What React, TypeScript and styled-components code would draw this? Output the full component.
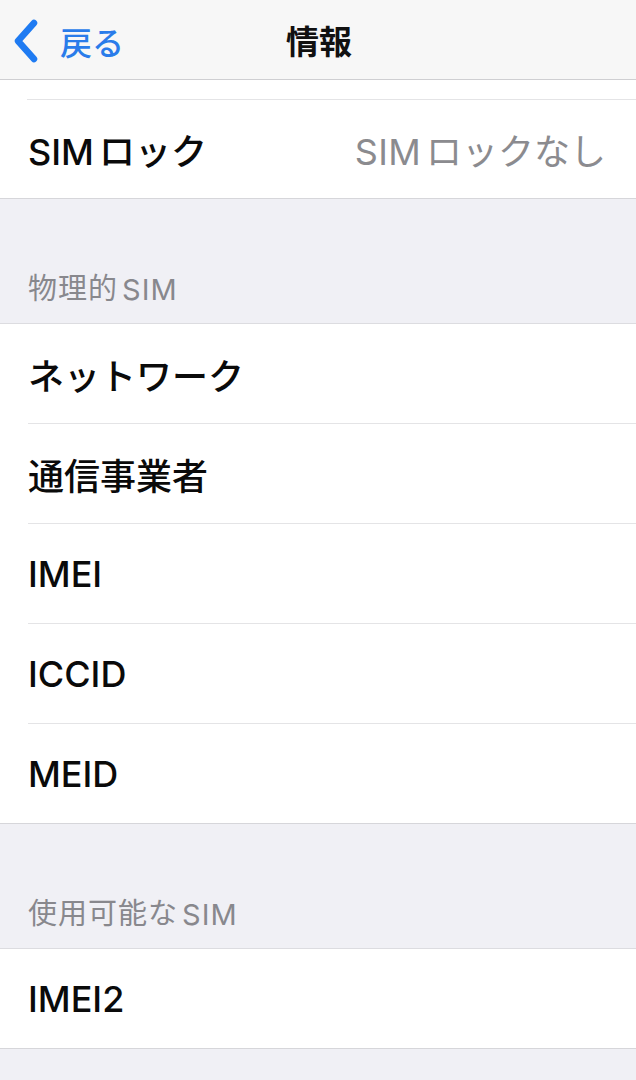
import { Fragment } from "react";
import styled, { createGlobalStyle } from "styled-components";

const GlobalStyle = createGlobalStyle`
  html, body {
    margin: 0;
    padding: 0;
    background: #f0f0f5;
  }
  body {
    font-family: Inter, "Noto Sans CJK JP", sans-serif;
    -webkit-font-smoothing: antialiased;
  }
`;

type RowT = {
  label: string;
  value?: string;
};

type SectionT = {
  header?: string;
  rows: Array<RowT>;
};

const sections: Array<SectionT> = [
  {
    header: "物理的SIM",
    rows: [
      { label: "ネットワーク" },
      { label: "通信事業者" },
      { label: "IMEI" },
      { label: "ICCID" },
      { label: "MEID" },
    ],
  },
  {
    header: "使用可能なSIM",
    rows: [{ label: "IMEI2" }],
  },
];

// splits text into latin / japanese runs so the two scripts get a bit of air between them
const Mixed = ({ text }: { text: string }) => {
  const runs = text.match(/[A-Za-z0-9]+|[^A-Za-z0-9]+/g) ?? [];
  return (
    <>
      {runs.map((run, i) => (
        <Fragment key={i}>
          {i > 0 ? <LatinGapS $latin={/^[A-Za-z0-9]/.test(run)}>{run}</LatinGapS> : run}
        </Fragment>
      ))}
    </>
  );
};

const ChevronLeft = () => (
  <svg width="30" height="44" viewBox="0 0 30 44" fill="none">
    <path
      d="M24 4 L8 22 L24 40"
      stroke="#1f7bf2"
      strokeWidth="6.5"
      strokeLinecap="round"
      strokeLinejoin="round"
    />
  </svg>
);

const App = () => {
  return (
    <PageS>
      <GlobalStyle />
      <NavBarS>
        <BackS>
          <ChevronLeft />
          <BackLabelS>戻る</BackLabelS>
        </BackS>
        <TitleS>情報</TitleS>
      </NavBarS>

      <GroupS>
        <CutRowS />
        <RowS $height={98}>
          <LabelS>
            <Mixed text="SIMロック" />
          </LabelS>
          <ValueS>
            <Mixed text="SIMロックなし" />
          </ValueS>
        </RowS>
      </GroupS>

      {sections.map((section, index) => (
        <div key={index}>
          <HeaderS>{section.header && <Mixed text={section.header} />}</HeaderS>
          <GroupS>
            {section.rows.map((row, i) => (
              <RowS key={i} $divider={i < section.rows.length - 1}>
                <LabelS>
                  <Mixed text={row.label} />
                </LabelS>
                {row.value && (
                  <ValueS>
                    <Mixed text={row.value} />
                  </ValueS>
                )}
              </RowS>
            ))}
          </GroupS>
        </div>
      ))}
      <FooterS />
    </PageS>
  );
};

const PageS = styled.div`
  width: 636px;
  min-height: 1080px;
  background: #f0f0f5;
  overflow: hidden;
`;

const NavBarS = styled.div`
  position: relative;
  height: 79px;
  background: #f7f7f7;
  border-bottom: 1px solid #cfcfd2;
  display: flex;
  align-items: center;
  justify-content: center;
`;

const BackS = styled.div`
  position: absolute;
  left: 10px;
  top: 19px;
  display: flex;
  align-items: center;
  gap: 20px;
`;

const BackLabelS = styled.span`
  font-family: "Noto Sans CJK JP", sans-serif;
  font-size: 32px;
  font-weight: 500;
  color: #2a7cea;
  line-height: 44px;
`;

const TitleS = styled.span`
  font-family: "Noto Sans CJK JP", sans-serif;
  font-size: 33px;
  font-weight: 700;
  color: #111;
  margin-left: 2px;
`;

const GroupS = styled.div`
  background: #ffffff;
  border-bottom: 1px solid #d6d6da;
`;

const CutRowS = styled.div`
  height: 19px;
  margin-left: 27px;
  border-bottom: 1px solid #e4e4e6;
`;

const RowS = styled.div<{ $divider?: boolean; $height?: number }>`
  height: ${({ $height }) => $height ?? 99}px;
  margin-left: 28px;
  padding-right: 30px;
  display: flex;
  align-items: center;
  justify-content: space-between;
  border-bottom: ${({ $divider }) => ($divider ? "1px solid #e4e4e6" : "none")};
`;

const LatinGapS = styled.span<{ $latin: boolean }>`
  margin-left: 0.14em;
  letter-spacing: ${({ $latin }) => ($latin ? "inherit" : "0")};
`;

const LabelS = styled.span`
  font-family: Inter, "Noto Sans CJK JP", sans-serif;
  font-size: 36px;
  font-weight: 500;
  color: #0a0a0a;
`;

const ValueS = styled.span`
  font-family: Inter, "Noto Sans CJK JP", sans-serif;
  font-size: 36px;
  font-weight: 400;
  color: #8b8b8f;
  letter-spacing: 0.3px;
`;

const HeaderS = styled.div`
  height: 125px;
  box-sizing: border-box;
  padding: 0 0 16px 28px;
  display: flex;
  align-items: flex-end;
  border-bottom: 1px solid #dcdce0;
  font-family: Inter, "Noto Sans CJK JP", sans-serif;
  font-size: 29px;
  color: #88888d;
  letter-spacing: 1px;
`;

const FooterS = styled.div`
  height: 40px;
`;

export default App;
